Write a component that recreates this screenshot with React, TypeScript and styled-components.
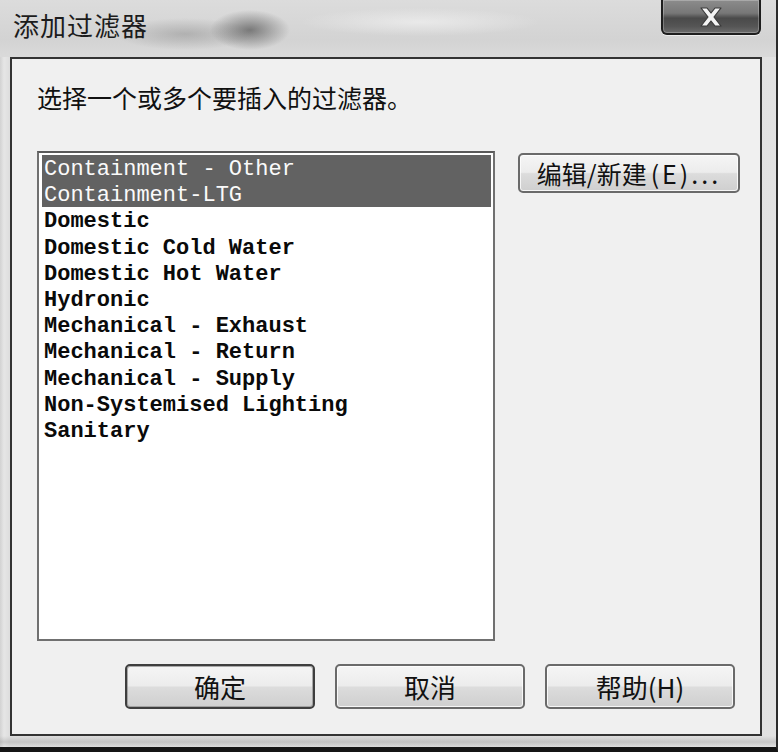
import React from 'react';
import styled, {createGlobalStyle} from 'styled-components';

const GlobalStyle = createGlobalStyle`
  html, body {
    margin: 0;
    padding: 0;
    background: #d6d6d6;
  }
`;

const CJK = `"Noto Sans CJK SC", "Noto Sans", sans-serif`;

const items = [
  'Containment - Other',
  'Containment-LTG',
  'Domestic',
  'Domestic Cold Water',
  'Domestic Hot Water',
  'Hydronic',
  'Mechanical - Exhaust',
  'Mechanical - Return',
  'Mechanical - Supply',
  'Non-Systemised Lighting',
  'Sanitary',
];
const selected = new Set([0, 1]);

const Window = styled.div`
  width: 778px;
  height: 752px;
  box-sizing: border-box;
  display: flex;
  flex-direction: column;
  border-right: 2px solid #2b2b2b;
  border-bottom: 5px solid #151515;
  background: linear-gradient(to right, #d2d2d2 0px, #e6e6e6 4px, #dddddd 10px, #d9d9d9 60%, #e2e2e2 100%);
  font-family: ${CJK};
`;

const TitleBar = styled.div`
  height: 57px;
  flex: none;
  display: flex;
  align-items: flex-start;
  justify-content: space-between;
  padding: 0 15px 0 13px;
  box-sizing: border-box;
  background:
    radial-gradient(ellipse 40px 20px at 250px 30px, rgba(60, 60, 60, 0.6), transparent),
    radial-gradient(ellipse 70px 16px at 185px 34px, rgba(110, 110, 110, 0.35), transparent),
    radial-gradient(ellipse 120px 14px at 420px 22px, rgba(245, 245, 245, 0.6), transparent),
    linear-gradient(to bottom, #dcdcdc, #d3d3d3 70%, #dadada);
`;

const Title = styled.div`
  margin-top: 10px;
  font-size: 26px;
  line-height: 30px;
  letter-spacing: 1px;
  color: #1c1c1c;
`;

const CloseButton = styled.div`
  width: 100px;
  height: 35px;
  box-sizing: border-box;
  display: flex;
  align-items: center;
  justify-content: center;
  border: 2px solid #1e1e1e;
  border-top: none;
  border-radius: 0 0 6px 6px;
  background: linear-gradient(to bottom, #8c8c8c 0%, #777 40%, #4a4a4a 55%, #555 80%, #6c6c6c 100%);
  box-shadow: inset 0 0 0 1px rgba(255, 255, 255, 0.25), 0 1px 0 #eee;
`;

const Body = styled.div`
  flex: 1;
  display: flex;
  padding: 0 14px 11px 10px;
  background: linear-gradient(to top, transparent 0px, rgba(120, 120, 120, 0.25) 5px, transparent 11px);
`;

const Client = styled.div`
  flex: 1;
  display: flex;
  flex-direction: column;
  border: 2px solid #333;
  background: #f0f0f0;
  padding: 23px 20px 25px 25px;
`;

const Prompt = styled.div`
  font-size: 25px;
  line-height: 30px;
  color: #111;
  margin-bottom: 39px;
`;

const MainRow = styled.div`
  flex: 1;
  display: flex;
  gap: 23px;
  align-items: flex-start;
  margin-bottom: 23px;
`;

const ListBox = styled.div`
  width: 458px;
  height: 490px;
  box-sizing: border-box;
  border: 2px solid #707070;
  border-top-color: #5a5a5a;
  background: #fff;
  padding: 2px 2px 2px 3px;
`;

const Item = styled.div<{$selected: boolean}>`
  height: 26.2px;
  box-sizing: border-box;
  padding: 3px 0 0 2px;
  line-height: 23px;
  font-family: "Liberation Mono", "DejaVu Sans Mono", monospace;
  font-size: 22px;
  white-space: pre;
  color: ${(p) => (p.$selected ? '#fafafa' : '#0a0a0a')};
  background: ${(p) => (p.$selected ? '#626262' : 'transparent')};
  font-weight: ${(p) => (p.$selected ? 400 : 700)};
`;

const Button = styled.div<{$default?: boolean; $width: number; $height: number}>`
  width: ${(p) => p.$width}px;
  height: ${(p) => p.$height}px;
  box-sizing: border-box;
  display: flex;
  align-items: center;
  justify-content: center;
  border: 2px solid ${(p) => (p.$default ? '#3e3e3e' : '#6a6a6a')};
  border-radius: 5px;
  background: linear-gradient(to bottom, #f5f5f5 0%, #ececec 48%, #dcdcdc 52%, #cfcfcf 100%);
  box-shadow: inset 0 0 0 1px ${(p) => (p.$default ? 'rgba(150,150,150,0.8)' : 'rgba(255,255,255,0.8)')};
  font-size: 26px;
  color: #111;
  white-space: nowrap;
`;

const EditButton = styled(Button)`
  margin-top: 2px;
  font-size: 25px;
`;

const Mnemonic = styled.span`
  letter-spacing: 3px;
  margin-left: 4px;
`;

const ButtonRow = styled.div`
  display: flex;
  justify-content: flex-end;
  gap: 20px;
  padding-right: 5px;
`;

const CloseIcon = () => (
  <svg width="26" height="22" viewBox="0 0 26 22">
    <path
      d="M3 2 L9 2 L13 7 L17 2 L23 2 L16 11 L23 20 L17 20 L13 15 L9 20 L3 20 L10 11 Z"
      fill="#f4f4f4"
      stroke="#3a3a3a"
      strokeWidth="1.2"
      strokeLinejoin="round"
    />
  </svg>
);

export default function App() {
  return (
    <>
      <GlobalStyle />
      <Window>
        <TitleBar>
          <Title>添加过滤器</Title>
          <CloseButton>
            <CloseIcon />
          </CloseButton>
        </TitleBar>
        <Body>
          <Client>
            <Prompt>选择一个或多个要插入的过滤器。</Prompt>
            <MainRow>
              <ListBox>
                {items.map((name, i) => (
                  <Item key={name} $selected={selected.has(i)}>
                    {name}
                  </Item>
                ))}
              </ListBox>
              <EditButton $width={222} $height={40}>
                编辑/新建<Mnemonic>(E)...</Mnemonic>
              </EditButton>
            </MainRow>
            <ButtonRow>
              <Button $default $width={190} $height={45}>
                确定
              </Button>
              <Button $width={190} $height={45}>
                取消
              </Button>
              <Button $width={190} $height={45}>
                帮助(H)
              </Button>
            </ButtonRow>
          </Client>
        </Body>
      </Window>
    </>
  );
}
